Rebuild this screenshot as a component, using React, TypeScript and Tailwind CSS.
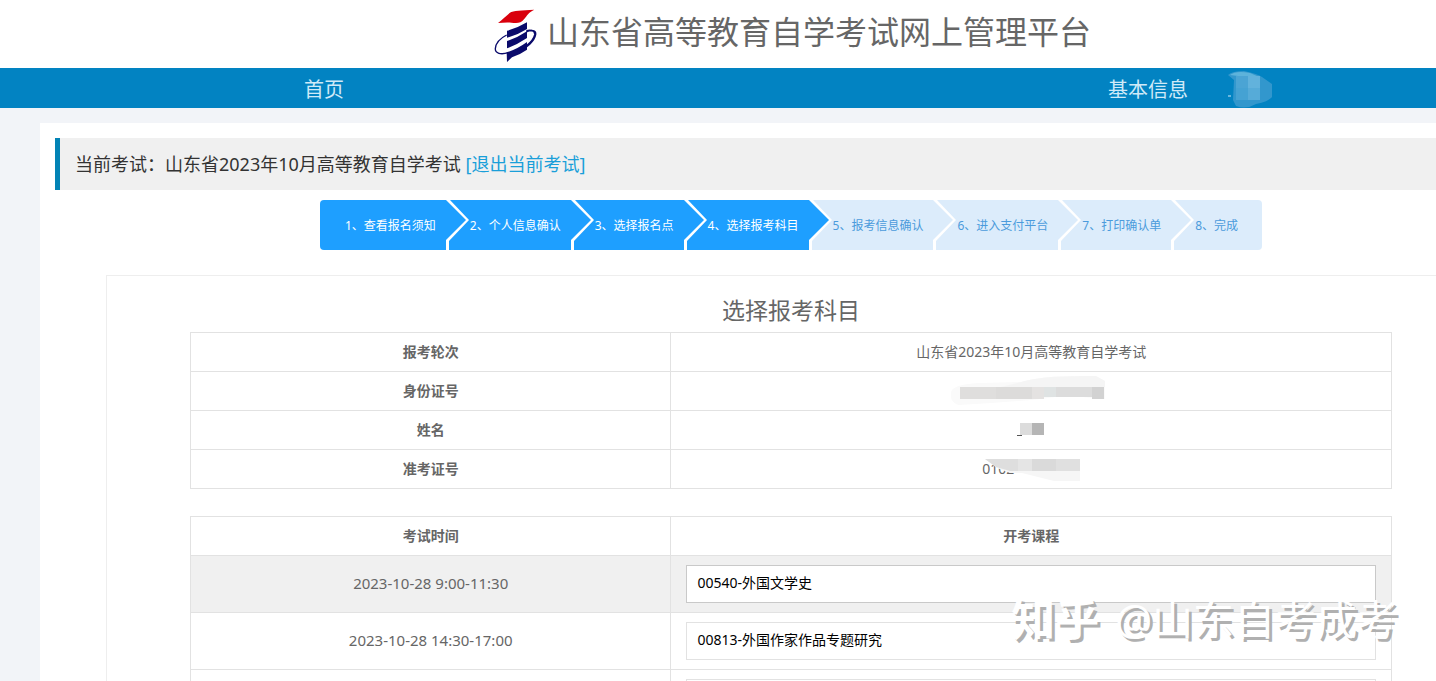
import React from 'react';

const steps = [
  '查看报名须知',
  '个人信息确认',
  '选择报名点',
  '选择报考科目',
  '报考信息确认',
  '进入支付平台',
  '打印确认单',
  '完成',
];

const CURRENT_STEP = 4;

const courses = [
  { time: '2023-10-28 9:00-11:30', course: '00540-外国文学史', active: true },
  { time: '2023-10-28 14:30-17:00', course: '00813-外国作家作品专题研究', active: false },
  { time: '', course: '', active: false },
];

const Logo: React.FC = () => (
  <svg viewBox="0 0 150 180" className="h-[60px] w-[50px]" aria-hidden="true">
    <path d="M21 57 C34 47 46 35 57 26 C66 19 92 19 130 17 C114 24 108 35 99 46 C90 59 76 58 61 56 C47 55 35 56 21 57Z" fill="#d9000d" />
    <path d="M48 80 Q78 73 108 55 V75 Q80 93 48 101Z" fill="#0a0a6b" />
    <path d="M48 111 Q80 101 108 82 V102 Q80 121 48 133Z" fill="#0a0a6b" />
    <path d="M47 145 Q76 137 108 114 V137 Q88 151 63 160 L48 174Z" fill="#0a0a6b" />
    <path
      d="M47 93 C27 103 14 119 13 134 C12 148 29 153 52 146 M106 84 C122 76 136 79 134 92 C131 110 108 133 79 145 M106 80 C122 76 132 82 131 92 C128 106 118 116 106 125"
      fill="none"
      stroke="#0a0a6b"
      strokeWidth="4"
    />
  </svg>
);

const MaskedUser: React.FC = () => (
  <svg viewBox="0 0 50 40" className="h-10 w-[50px]">
    <path d="M0 7 Q4 3 16 3 Q30 6 34 9 L44 16 V29 Q40 34 28 36 Q18 42 8 38 L5 32 L6 12Z" fill="#3297cd" />
    <path d="M2 7 Q8 2 22 5 L29 8 H10Z" fill="#5db3db" />
    <path d="M8 8h12v12H8z" fill="#4ba4d4" />
    <path d="M20 8h12v12H20z" fill="#62b2dc" />
    <path d="M8 20h12v12H8z" fill="#45a2d3" />
    <path d="M20 20h12v12H20z" fill="#56abd8" />
    <path d="M0 28h3" stroke="#cfeaf8" />
  </svg>
);

const Header: React.FC = () => (
  <header>
    <div className="flex h-[68px] items-center justify-center bg-white">
      <Logo />
      <h1 className="ml-[6px] pb-1 text-[32px] leading-10 text-[#666]">山东省高等教育自学考试网上管理平台</h1>
    </div>
    <nav className="flex h-10 items-center justify-between bg-[#0283c2] px-[304px] text-xl text-[#cfeaf8]">
      <a href="#" className="pt-[3px]">首页</a>
      <div className="flex items-center gap-10">
        <a href="#" className="pt-[3px]">基本信息</a>
        <a href="#" aria-label="用户">
          <MaskedUser />
        </a>
      </div>
    </nav>
  </header>
);

const StepBar: React.FC = () => (
  <ol className="mt-[10px] flex justify-center gap-[3px] text-xs">
    {steps.map((label, index) => {
      const done = index < CURRENT_STEP;
      const first = index === 0;
      const last = index === steps.length - 1;
      return (
        <li
          key={label}
          className={[
            'relative flex h-[50px] items-center pt-[2px] whitespace-nowrap',
            done ? 'bg-[#1e9fff] text-white' : 'bg-[#dcecfb] text-[#4b9bdc]',
            first ? 'rounded-l pl-[25px]' : 'pl-[21px]',
            last ? 'rounded-r pr-6' : 'pr-[10px]',
          ].join(' ')}
        >
          {index + 1}、{label}
          {!last && (
            <svg viewBox="0 0 24 50" className="absolute top-0 left-full z-10 h-[50px] w-6">
              <path d="M0 0H4L23 20L3 41V50H0Z" fill="#fff" />
              <path d="M0 0L20 20L0 40Z" fill={done ? '#1e9fff' : '#dcecfb'} />
            </svg>
          )}
        </li>
      );
    })}
  </ol>
);

const MaskedId: React.FC = () => (
  <svg viewBox="0 0 160 38" className="mx-auto block h-[38px] w-40">
    <path d="M0 20 Q2 12 30 11 L70 10 Q90 3 145 4 L154 9 V27 L140 26 Q115 22 90 27 Q50 31 8 33 Q-2 30 0 20Z" fill="#fafafa" />
    <path d="M70 10 Q90 3 145 4 L154 9 V15 H50Z" fill="#f5f5f5" />
    <path d="M9 15h36v12H9z" fill="#dfdedd" />
    <path d="M45 15h36v12H45z" fill="#dcdbda" />
    <path d="M81 15h12v12H81z" fill="#e4e2e1" />
    <path d="M93 15h12v10H93z" fill="#dfe3e3" />
    <path d="M105 15h36v10H105z" fill="#dcdcdc" />
    <path d="M141 15h12v12H141z" fill="#d2d2d2" />
  </svg>
);

const MaskedName: React.FC = () => (
  <svg viewBox="0 0 28 18" className="mx-auto block h-[18px] w-7">
    <path d="M3 2h12v12H3z" fill="#dcdcdc" />
    <path d="M15 2h12v12H15z" fill="#b5b5b5" />
    <path d="M0 14h5v1H0z" fill="#555" />
  </svg>
);

const MaskedTicket: React.FC = () => (
  <div className="relative mx-auto w-[98px] text-left">
    0102
    <svg viewBox="0 0 98 24" className="absolute inset-0 h-6 w-[98px]">
      <path d="M3 0H98V22H72L40 14H28L15 9Z" fill="#f6f6f6" />
      <path d="M3 0h33v12H28L14 8Z" fill="#dedede" />
      <path d="M36 0h14v12H36z" fill="#e5e5e5" />
      <path d="M50 0h24v12H50z" fill="#dadada" />
      <path d="M74 0h24v12H74z" fill="#e0e0e0" />
    </svg>
  </div>
);

const InfoRow: React.FC<{ label: string; children: React.ReactNode }> = ({ label, children }) => (
  <tr className="h-[39px]">
    <th scope="row" className="w-2/5 border border-[#e2e2e2] p-0 font-bold">
      {label}
    </th>
    <td className="border border-[#e2e2e2] p-0">{children}</td>
  </tr>
);

const InfoTable: React.FC = () => (
  <table className="w-full table-fixed border-collapse text-center">
    <tbody>
      <InfoRow label="报考轮次">山东省2023年10月高等教育自学考试</InfoRow>
      <InfoRow label="身份证号">
        <MaskedId />
      </InfoRow>
      <InfoRow label="姓名">
        <MaskedName />
      </InfoRow>
      <InfoRow label="准考证号">
        <MaskedTicket />
      </InfoRow>
    </tbody>
  </table>
);

const CourseTable: React.FC = () => (
  <table className="mt-[27px] w-full table-fixed border-collapse text-center">
    <thead>
      <tr className="h-[39px]">
        <th scope="col" className="w-2/5 border border-[#e2e2e2] p-0">考试时间</th>
        <th scope="col" className="border border-[#e2e2e2] p-0">开考课程</th>
      </tr>
    </thead>
    <tbody>
      {courses.map(({ time, course, active }, index) => (
        <tr key={index} className={active ? 'h-[57px] bg-[#f0f0f0]' : 'h-[57px]'}>
          <td className="border border-[#e2e2e2] p-0 pb-[2px] text-[15px]">{time}</td>
          <td className="border border-[#e2e2e2] px-[15px] py-[9px]">
            <input
              type="text"
              readOnly
              aria-label={`${time} 开考课程`}
              value={course}
              className={[
                'block h-[38px] w-full border bg-white px-[10px] pb-1 text-black outline-none',
                active ? 'border-[#c9c9c9]' : 'border-[#e2e2e2]',
              ].join(' ')}
            />
          </td>
        </tr>
      ))}
    </tbody>
  </table>
);

const Watermark: React.FC = () => (
  <div className="pointer-events-none absolute right-[38px] bottom-8 z-20 flex items-center gap-4 text-[41px] leading-[60px] whitespace-nowrap text-white [text-shadow:3px_3px_0_#b0b0b0]">
    <span className="text-[44px] font-bold">知乎</span>
    <span>@山东自考成考</span>
  </div>
);

export default function App() {
  return (
    <div className="relative h-screen overflow-hidden bg-[#f2f4f8] font-['Noto_Sans','Noto_Sans_CJK_SC',sans-serif] text-sm leading-5 text-[#666]">
      <div className="min-w-[1582px]">
        <Header />
        <main className="mx-10 mt-[15px] bg-white p-[15px]">
          <div className="border-l-[5px] border-[#0283b5] bg-[#f0f0f0] px-[15px] py-3 text-lg leading-7 text-[#333]">
            当前考试：山东省2023年10月高等教育自学考试{' '}
            <a href="#" className="text-[#1a9fd9]">
              [退出当前考试]
            </a>
          </div>
          <StepBar />
          <section className="mx-[51px] mt-[25px] border border-[#eee] px-[83px] pt-4">
            <h2 className="pb-1 text-center text-[23px] leading-9">选择报考科目</h2>
            <InfoTable />
            <CourseTable />
          </section>
        </main>
      </div>
      <Watermark />
    </div>
  );
}
